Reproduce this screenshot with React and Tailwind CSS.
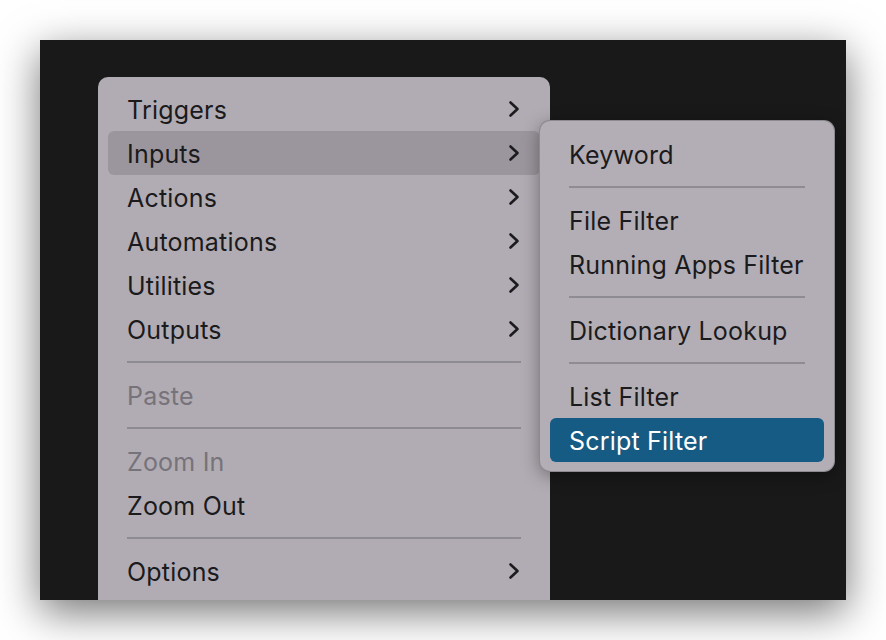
import React from 'react'

function Chevron() {
  return (
    <svg width="12" height="18" viewBox="0 0 12 18" fill="none" className="shrink-0">
      <path d="M2.5 2.5 L9.5 9 L2.5 15.5" stroke="#1c1b1d" strokeWidth="2.6" strokeLinecap="round" strokeLinejoin="round" />
    </svg>
  );
}

function Row({ label, sub, active, disabled, selected }) {
  let cls = 'flex h-[44px] items-center justify-between rounded-[6px] pl-[19px] pr-[20px] text-[25px] leading-none tracking-[0.2px]';
  if (active) cls += ' bg-[#9b969d]';
  if (selected) cls += ' bg-[#155b84] text-white';
  else if (disabled) cls += ' text-[#77737a]';
  else cls += ' text-[#1b1a1c]';
  return (
    <div className={cls}>
      <span className="pt-[3px]">{label}</span>
      {sub && <Chevron />}
    </div>
  );
}

function Sep() {
  return (
    <div className="flex h-[22px] items-center px-[19px]">
      <div className="h-[2px] w-full bg-[#8f8b92]" />
    </div>
  );
}

export default function App() {
  return (
    <div className="h-[640px] w-[886px] bg-white p-[40px]" style={{ fontFamily: 'Inter, "Noto Sans", sans-serif' }}>
      <div className="flex h-[560px] w-[806px] items-start overflow-hidden bg-[#191919] pl-[58px] pt-[37px] shadow-[0_12px_40px_rgba(0,0,0,0.55)]">
        {/* main menu */}
        <div className="w-[452px] shrink-0 rounded-[10px] bg-[#b1acb3] px-[10px] pb-[30px] pt-[10px]">
          <Row label="Triggers" sub />
          <Row label="Inputs" sub active />
          <Row label="Actions" sub />
          <Row label="Automations" sub />
          <Row label="Utilities" sub />
          <Row label="Outputs" sub />
          <Sep />
          <Row label="Paste" disabled />
          <Sep />
          <Row label="Zoom In" disabled />
          <Row label="Zoom Out" />
          <Sep />
          <Row label="Options" sub />
        </div>
        {/* submenu */}
        <div className="relative z-10 ml-[-10px] mt-[44px] w-[294px] shrink-0 rounded-[10px] bg-[#b3aeb5] px-[10px] pb-[9px] pt-[11px] shadow-[0_4px_18px_rgba(0,0,0,0.4)] ring-1 ring-[#8d8990]">
          <Row label="Keyword" />
          <Sep />
          <Row label="File Filter" />
          <Row label="Running Apps Filter" />
          <Sep />
          <Row label="Dictionary Lookup" />
          <Sep />
          <Row label="List Filter" />
          <Row label="Script Filter" selected />
        </div>
      </div>
    </div>
  );
}
